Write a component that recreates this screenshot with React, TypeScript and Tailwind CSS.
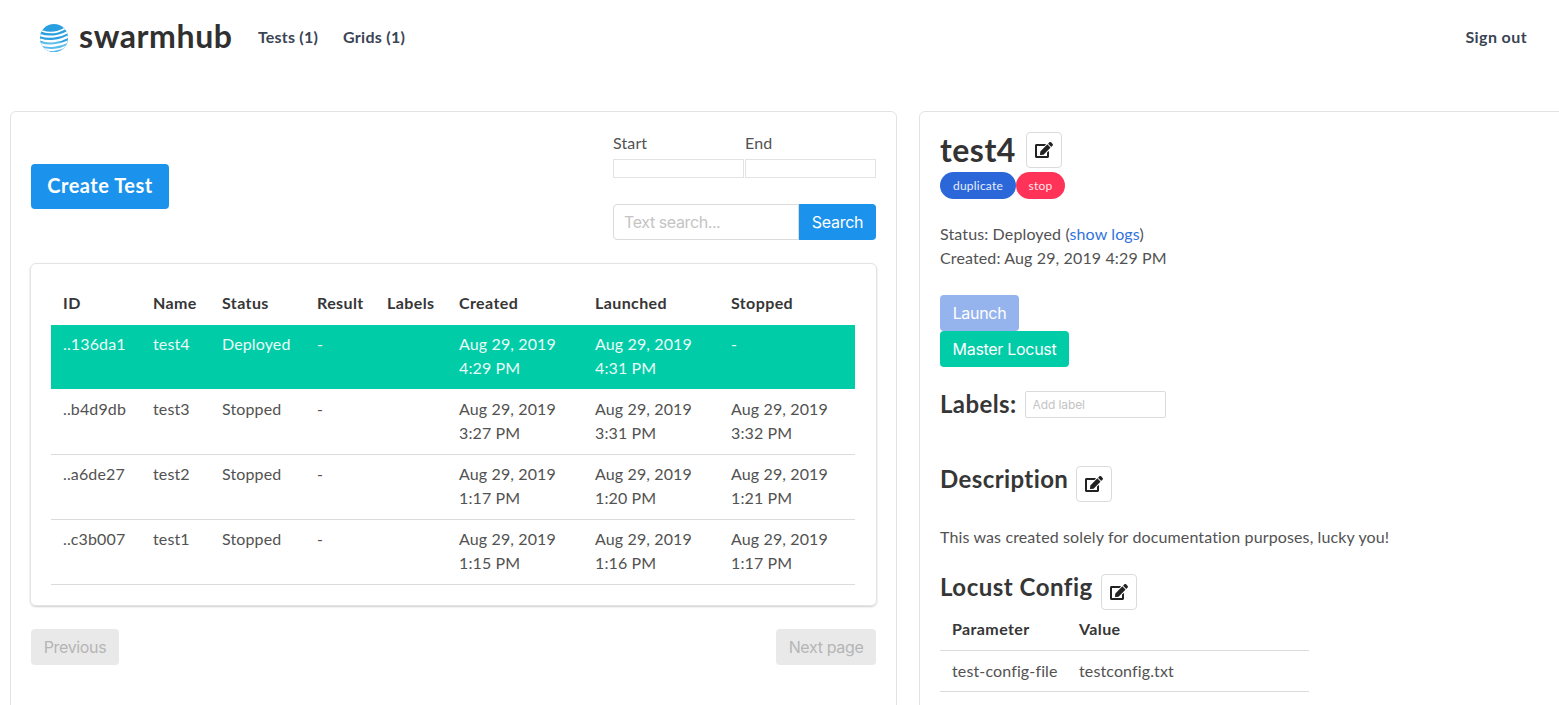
import { FaEdit } from "react-icons/fa";

const rows = [
  { id: "..136da1", name: "test4", status: "Deployed", created: ["Aug 29, 2019", "4:29 PM"], launched: ["Aug 29, 2019", "4:31 PM"], stopped: null, active: true },
  { id: "..b4d9db", name: "test3", status: "Stopped", created: ["Aug 29, 2019", "3:27 PM"], launched: ["Aug 29, 2019", "3:31 PM"], stopped: ["Aug 29, 2019", "3:32 PM"], active: false },
  { id: "..a6de27", name: "test2", status: "Stopped", created: ["Aug 29, 2019", "1:17 PM"], launched: ["Aug 29, 2019", "1:20 PM"], stopped: ["Aug 29, 2019", "1:21 PM"], active: false },
  { id: "..c3b007", name: "test1", status: "Stopped", created: ["Aug 29, 2019", "1:15 PM"], launched: ["Aug 29, 2019", "1:16 PM"], stopped: ["Aug 29, 2019", "1:17 PM"], active: false },
];

const headers = ["ID", "Name", "Status", "Result", "Labels", "Created", "Launched", "Stopped"];
const widths = ["w-[90px]", "w-[69px]", "w-[95px]", "w-[70px]", "w-[72px]", "w-[136px]", "w-[136px]", "w-[136px]"];

function Logo() {
  return (
    <svg width="28" height="28" viewBox="0 0 28 28" className="shrink-0">
      <defs>
        <clipPath id="globe">
          <circle cx="14" cy="14" r="14" />
        </clipPath>
      </defs>
      <g clipPath="url(#globe)">
        <rect width="28" height="28" fill="#2a9fe0" />
        <rect y="18" width="28" height="10" fill="#5dbcec" />
        <path d="M2 7 C9 9.5 18 8.5 25 4.5" stroke="#fff" strokeWidth="1.6" fill="none" />
        <path d="M0 11 C8 14 20 13 28 8" stroke="#fff" strokeWidth="2.2" fill="none" />
        <path d="M0 15.5 C8 18.5 20 17.5 28 12.5" stroke="#fff" strokeWidth="2.4" fill="none" />
        <path d="M0 20 C8 23 20 22 28 17.5" stroke="#fff" strokeWidth="2.4" fill="none" />
        <path d="M2 24.5 C9 27 20 26 27 22" stroke="#fff" strokeWidth="2" fill="none" />
      </g>
    </svg>
  );
}

function EditButton() {
  return (
    <button className="w-9 h-9 shrink-0 flex items-center justify-center bg-white border border-[#dbdbdb] rounded-[4px] text-[#222]">
      <FaEdit className="w-[18px] h-[16px]" />
    </button>
  );
}

export default function App() {
  return (
    <div className="h-[705px] w-[1559px] overflow-hidden bg-white text-[#525252] font-['Lato','Noto_Sans',sans-serif] tracking-[0.13px]">
      <nav className="h-[75px] flex items-center pl-10 pr-8">
        <Logo />
        <span className="ml-[11px] w-[154px] text-[32px] font-bold tracking-[0.6px] leading-none text-[#303030] -mt-1">swarmhub</span>
        <a className="ml-[25px] text-base font-bold tracking-[0.2px] text-[#3a4454] -mt-0.5">Tests (1)</a>
        <a className="ml-[25px] text-base font-bold tracking-[0.3px] text-[#3a4454] -mt-0.5">Grids (1)</a>
        <a className="ml-auto text-base font-bold tracking-[0.4px] text-[#3a4454] -mt-0.5">Sign out</a>
      </nav>

      <div className="flex items-start pl-2.5 pt-9 gap-[22px]">
        <section className="w-[887px] h-[700px] shrink-0 border border-[#e3e3e3] rounded-md px-[19px] pt-[19px]">
          <div className="flex justify-between px-px">
            <button className="mt-[33px] h-[45px] w-[138px] pb-[3px] rounded-[4px] bg-[#1b92ec] text-white text-xl font-bold tracking-[0.5px]">Create Test</button>
            <div className="w-[263px]">
              <div className="flex gap-px">
                <label className="w-[131px] block">
                  <span className="block text-base leading-6">Start</span>
                  <span className="block mt-[4px] h-[19px] border border-[#e3e3e3]"></span>
                </label>
                <label className="w-[131px] block">
                  <span className="block text-base leading-6">End</span>
                  <span className="block mt-[4px] h-[19px] border border-[#e3e3e3]"></span>
                </label>
              </div>
              <div className="flex mt-[26px] h-9 font-['Inter',sans-serif] tracking-[-0.3px]">
                <input
                  placeholder="Text search..."
                  className="w-[186px] h-9 px-[10px] border border-[#dbdbdb] rounded-l-[4px] text-base tracking-[-0.4px] placeholder:text-[#c4c4c4] outline-none"
                />
                <button className="w-[77px] h-9 rounded-r-[4px] bg-[#1b92ec] text-white text-base">Search</button>
              </div>
            </div>
          </div>

          <div className="mt-[23px] h-[343px] border border-[#e3e3e3] rounded-md shadow-[0_1px_2px_rgba(10,10,10,0.2)] px-5 pt-5">
            <table className="w-[804px] table-fixed border-collapse text-base leading-6">
              <thead>
                <tr className="h-[41px] text-left text-[#363636]">
                  {headers.map((h, i) => (
                    <th key={h} className={"px-3 pb-[3px] font-bold tracking-[0.4px] " + widths[i]}>
                      {h}
                    </th>
                  ))}
                </tr>
              </thead>
              <tbody>
                {rows.map((r, i) => {
                  const cell = i === 1 ? "px-3 py-2 align-top" : "px-3 pt-[7px] pb-[9px] align-top";
                  return (
                    <tr key={r.id} className={r.active ? "h-[64px] bg-[#00cca8] text-[#eafaf7]" : "h-[65px] border-b border-[#dbdbdb]"}>
                      <td className={cell}>{r.id}</td>
                      <td className={cell}>{r.name}</td>
                      <td className={cell}>{r.status}</td>
                      <td className={cell}>-</td>
                      <td className={cell}></td>
                      <td className={cell}>{r.created[0]}<br />{r.created[1]}</td>
                      <td className={cell}>{r.launched[0]}<br />{r.launched[1]}</td>
                      <td className={cell}>
                        {r.stopped ? <>{r.stopped[0]}<br />{r.stopped[1]}</> : "-"}
                      </td>
                    </tr>
                  );
                })}
              </tbody>
            </table>
          </div>

          <div className="mt-[23px] px-px flex justify-between font-['Inter',sans-serif] text-base tracking-[-0.35px]">
            <button className="h-9 w-[88px] rounded-[4px] bg-[#e9e9e9] text-[#b5b5b5]">Previous</button>
            <button className="h-9 w-[100px] rounded-[4px] bg-[#e9e9e9] text-[#b5b5b5]">Next page</button>
          </div>
        </section>

        <section className="w-[660px] h-[700px] shrink-0 border border-[#e3e3e3] rounded-md pl-5 pt-5">
          <div className="flex items-center gap-[10px] h-9">
            <h1 className="text-[32px] font-bold leading-none tracking-[0.5px] text-[#333]">test4</h1>
            <EditButton />
          </div>
          <div className="flex mt-1 text-xs tracking-[0.2px]">
            <span className="h-[27px] w-[76px] flex items-center justify-center rounded-full bg-[#2b67d9] text-[#e6eefc]">duplicate</span>
            <span className="h-[27px] w-[49px] flex items-center justify-center rounded-full bg-[#ff3358] text-[#ffe6ea]">stop</span>
          </div>
          <p className="mt-[23px] text-base leading-6">
            Status: Deployed (<a className="text-[#3273dc]">show logs</a>)<br />
            Created: Aug 29, 2019 4:29 PM
          </p>
          <div className="mt-[25px] font-['Inter',sans-serif] text-base tracking-[-0.3px] text-white flex flex-col items-start">
            <button className="h-9 w-[79px] rounded-[4px] bg-[#95b3ec]">Launch</button>
            <button className="h-9 w-[129px] rounded-[4px] bg-[#00cca8]">Master Locust</button>
          </div>
          <div className="mt-6 flex items-center gap-2 h-[27px]">
            <h2 className="text-2xl font-bold tracking-[0.4px] text-[#363636] leading-none pb-[2px]">Labels:</h2>
            <input
              placeholder="Add label"
              className="w-[141px] h-[27px] px-[7px] border border-[#dbdbdb] rounded-[2px] text-xs font-['Inter',sans-serif] tracking-[-0.1px] placeholder:text-[#c4c4c4] outline-none"
            />
          </div>
          <div className="mt-[48px] flex items-start gap-2">
            <h2 className="text-2xl font-bold tracking-[0.4px] text-[#363636] leading-[26px]">Description</h2>
            <EditButton />
          </div>
          <p className="mt-[23px] text-base leading-6">This was created solely for documentation purposes, lucky you!</p>
          <div className="mt-[25px] flex items-start gap-2">
            <h2 className="text-2xl font-bold tracking-[0.5px] text-[#363636] leading-[26px]">Locust Config</h2>
            <EditButton />
          </div>
          <table className="mt-[1px] w-[369px] table-fixed border-collapse text-base leading-6 whitespace-nowrap">
            <thead>
              <tr className="h-[39px] text-left text-[#363636] border-b border-[#dbdbdb]">
                <th className="w-[127px] px-3 pb-[2px] font-bold tracking-[0.4px]">Parameter</th>
                <th className="px-3 pb-[2px] font-bold tracking-[0.4px]">Value</th>
              </tr>
            </thead>
            <tbody>
              <tr className="h-[41px] border-b border-[#dbdbdb]">
                <td className="px-3">test-config-file</td>
                <td className="px-3">testconfig.txt</td>
              </tr>
              <tr className="h-[41px]">
                <td className="px-3">slave-count</td>
                <td className="px-3">10</td>
              </tr>
            </tbody>
          </table>
        </section>
      </div>
    </div>
  );
}
